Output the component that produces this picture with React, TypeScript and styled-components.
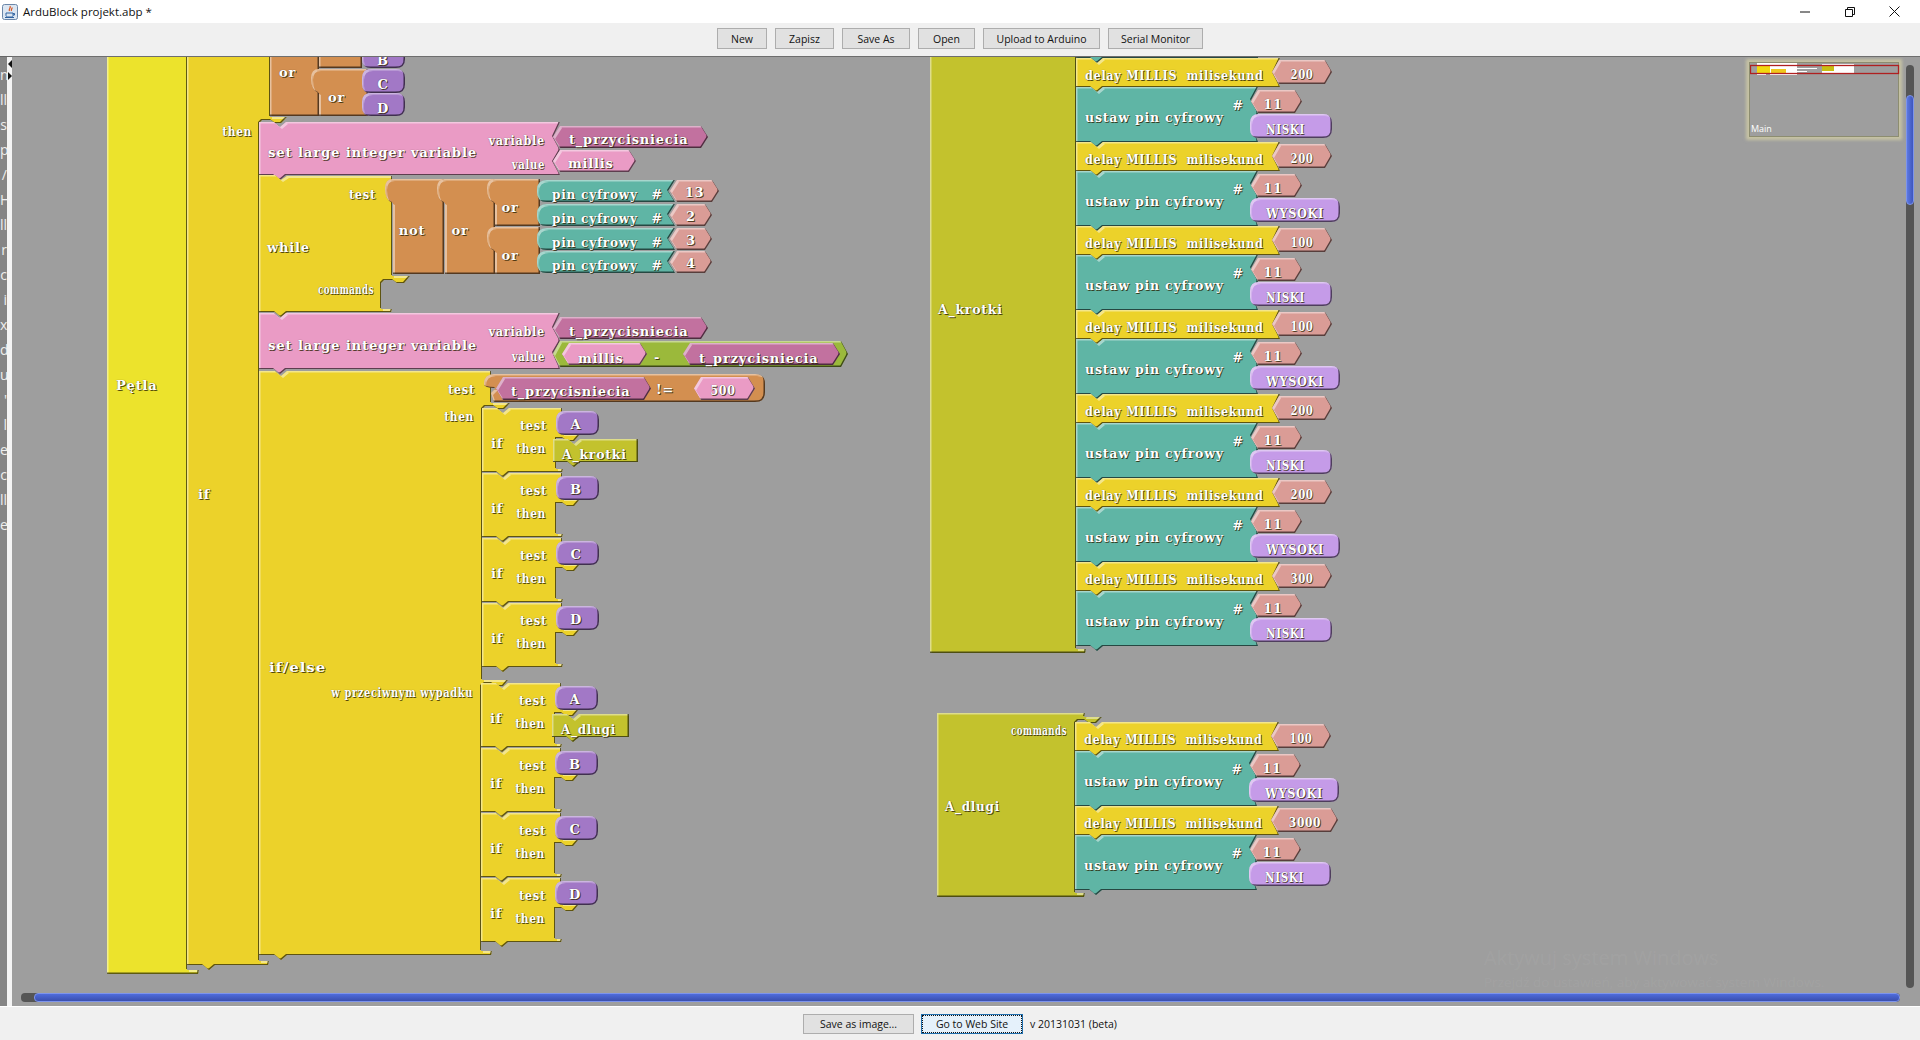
import styled, { createGlobalStyle } from "styled-components";

const C = {
  loop: "#ece32c",
  amber: "#ecd22a",
  pink: "#ea9bc5",
  magenta: "#c2719f",
  teal: "#5fb5a5",
  orange: "#d38f50",
  purple: "#a278c6",
  lilac: "#c59be8",
  salmon: "#da9c96",
  green: "#9bb93b",
  olive: "#c3c22d",
};

const FIT: Record<string, number> = {
  commands: 0.66,
  "w przeciwnym wypadku": 0.76,
  "delay MILLIS  milisekund": 0.865,
  "ustaw pin cyfrowy": 0.965,
  "set large integer variable": 1.02,
  variable: 0.87,
  value: 0.78,
  test: 0.88,
  then: 0.82,
  "if/else": 1.15,
  "pin cyfrowy": 0.93,
  A_krotki: 0.96,
  A_dlugi: 0.92,
  NISKI: 0.8,
  WYSOKI: 0.87,
  "100": 0.78,
  "200": 0.78,
  "300": 0.78,
  "500": 0.85,
  "3000": 0.82,
};

type Art = { d: string; fill: string };
type Text = { x: number; y: number; text: string; align?: "l" | "r" | "c" };

const art: Art[] = [];
const labels: Text[] = [];

const add = (d: string, fill: string) => art.push({ d, fill });
const say = (x: number, y: number, text: string, align: Text["align"] = "l") =>
  labels.push({ x, y, text, align });

// statement block with a dip on top and a tab below
const stmt = (x: number, y: number, w: number, h: number, right = "") =>
  `M${x} ${y}H${x + 15}L${x + 21} ${y + 5}L${x + 27} ${y}H${x + w}${right}V${y + h}H${x + 27}L${x + 21} ${y + h + 5}L${x + 15} ${y + h}H${x}Z`;

const hexPath = (x0: number, y0: number, x1: number, y1: number) => {
  const m = (y0 + y1) / 2;
  return `M${x0} ${m}L${x0 + 7} ${y0}H${x1 - 7}L${x1} ${m}L${x1 - 7} ${y1}H${x0 + 7}Z`;
};

const pillPath = (x0: number, y0: number, x1: number, y1: number) => {
  const r = 9;
  return `M${x0 + r} ${y0}H${x1 - r}Q${x1} ${y0} ${x1} ${y0 + r}V${y1 - r}Q${x1} ${y1} ${x1 - r} ${y1}H${x0 + r}Q${x0} ${y1} ${x0} ${y1 - r}V${y0 + r}Q${x0} ${y0} ${x0 + r} ${y0}Z`;
};

// boolean operator column, the rounded socket sits on its top left corner
const boolPath = (x0: number, y0: number, x1: number, y1: number) =>
  `M${x0} ${y0}H${x1}V${y1}H${x0}V${y0 + 24}Q${x0 - 8} ${y0 + 22} ${x0 - 8} ${y0 + 9}Q${x0 - 8} ${y0} ${x0} ${y0}Z`;

const setVariable = (y: number, h: number) => {
  add(
    stmt(259, y, 301, h, `L553 ${y + 15}L560 ${y + 28}L553 ${y + 40}L560 ${y + h}`),
    C.pink
  );
};

const ifBlock = (x: number, y: number, letter: string, call?: string, callEnd?: number) => {
  add(
    `M${x} ${y}H${x + 15}L${x + 21} ${y + 5}L${x + 27} ${y}H${x + 80}V${y + 26}H${x + 98}L${x + 92} ${y + 33}H${x + 85}L${x + 81} ${y + 30}H${x + 74}V${y + 61}H${x + 81}L${x + 80} ${y + 64}H${x + 27}L${x + 21} ${y + 69}L${x + 15} ${y + 64}H${x}Z`,
    C.amber
  );
  add(pillPath(x + 74, y + 3, x + 117, y + 27), C.purple);
  say(x + 9, y + 35, "if");
  say(x + 65, y + 17, "test", "r");
  say(x + 64, y + 40, "then", "r");
  say(x + 94, y + 16, letter, "c");
  if (call && callEnd) {
    add(stmt(x + 71, y + 31, callEnd - x - 71, 23), C.olive);
    say(x + 80, y + 46, call);
  }
};

const delayRow = (x: number, y: number, ms: string, state: string) => {
  const hexEnd = x + (ms.length > 3 ? 263 : 256);
  const pillEnd = x + (state === "WYSOKI" ? 264 : 256);
  add(stmt(x, y, 204, 29, `L${x + 197} ${y + 15}L${x + 204} ${y + 29}`), C.amber);
  add(hexPath(x + 196, y + 2, hexEnd, y + 26), C.salmon);
  say(x + 9, y + 17, "delay MILLIS  milisekund");
  say((x + 196 + hexEnd) / 2, y + 16, ms, "c");

  const t = y + 29;
  add(
    stmt(x, t, 182, 55, `L${x + 175} ${t + 13}L${x + 182} ${t + 26}L${x + 176} ${t + 40}L${x + 182} ${t + 55}`),
    C.teal
  );
  add(hexPath(x + 175, t + 3, x + 226, t + 26), C.salmon);
  add(pillPath(x + 174, t + 27, pillEnd, t + 51), C.lilac);
  say(x + 9, t + 30, "ustaw pin cyfrowy");
  say(x + 162, t + 18, "#", "c");
  say(x + 197, t + 17, "11", "c");
  say(x + 190, t + 42, state);
};

const buildBlocks = () => {
  // Pętla loop and the big if
  add("M107 40H187V970H199L198 974H107Z", C.loop);
  say(116, 385, "Pętla");
  add(
    "M187 40H270V117H287L281 123H275L271 120H262L259 123V961H269L268 965H215L209 970L203 965H187Z",
    C.amber
  );
  say(198, 494, "if");
  say(252, 131, "then", "r");

  // or tree in the if test
  add("M270 40H319V116H270Z", C.orange);
  add("M319 40H362V68H319Z", C.orange);
  add(boolPath(319, 69, 368, 116), C.orange);
  say(279, 72, "or");
  say(328, 97, "or");
  add(pillPath(362, 40, 405, 68), C.purple);
  add(pillPath(362, 69, 405, 93), C.purple);
  add(pillPath(362, 93, 405, 116), C.purple);
  say(383, 60, "B", "c");
  say(383, 84, "C", "c");
  say(383, 108, "D", "c");

  // first set large integer variable
  setVariable(122, 53);
  say(268, 152, "set large integer variable");
  say(545, 140, "variable", "r");
  say(545, 164, "value", "r");
  add(hexPath(553, 126, 708, 148), C.magenta);
  say(569, 139, "t_przycisniecia");
  add(hexPath(553, 150, 636, 172), C.pink);
  say(568, 163, "millis");

  // while with the not / or tree
  add(
    "M259 175H275L281 180L287 176H392V276H410L404 283H397L393 280H384L381 283V309H392L391 312H287L281 317L275 312H259Z",
    C.amber
  );
  say(376, 194, "test", "r");
  say(267, 247, "while");
  say(374, 289, "commands", "r");
  add(boolPath(393, 179, 444, 274), C.orange);
  add(boolPath(445, 179, 495, 274), C.orange);
  add(boolPath(495, 179, 540, 226), C.orange);
  add(boolPath(495, 227, 540, 274), C.orange);
  say(412, 230, "not", "c");
  say(460, 230, "or", "c");
  say(510, 207, "or", "c");
  say(510, 255, "or", "c");
  ["13", "2", "3", "4"].forEach((pin, i) => {
    const top = 180 + i * 24 - (i === 3 ? 1 : 0);
    const end = pin === "13" ? 719 : 712;
    add(`M547 ${top}H675L668 ${top + 11}L675 ${top + 22}H547Q537 ${top + 22} 537 ${top + 12}V${top + 10}Q537 ${top} 547 ${top}Z`, C.teal);
    add(hexPath(670, top, end, top + 22), C.salmon);
    say(552, top + 14, "pin cyfrowy");
    say(657, top + 14, "#", "c");
    say((670 + end) / 2, top + 12, pin, "c");
  });

  // second set large integer variable
  setVariable(313, 56);
  say(268, 345, "set large integer variable");
  say(545, 331, "variable", "r");
  say(545, 356, "value", "r");
  add(hexPath(553, 317, 708, 339), C.magenta);
  say(569, 331, "t_przycisniecia");
  add(hexPath(553, 341, 848, 367), C.green);
  add(hexPath(562, 343, 647, 365), C.pink);
  say(578, 358, "millis");
  say(657, 357, "-", "c");
  add(hexPath(683, 343, 840, 365), C.magenta);
  say(699, 358, "t_przycisniecia");

  // if/else
  add(
    "M259 371H275L281 376L287 371H491V403H510L504 409H498L494 406H485L482 409V680H508L503 686H496L492 683H485L481 686V951H492L491 955H287L281 960L275 955H259Z",
    C.amber
  );
  say(475, 389, "test", "r");
  say(474, 416, "then", "r");
  say(269, 667, "if/else");
  say(473, 692, "w przeciwnym wypadku", "r");
  add(
    "M494 374H755Q765 374 765 384V392Q765 402 755 402H494L491 393L496 388Q484 388 484 384Q484 374 494 374Z",
    C.orange
  );
  add(hexPath(496, 377, 651, 400), C.magenta);
  say(511, 391, "t_przycisniecia");
  say(665, 389, "!=", "c");
  add(hexPath(694, 377, 755, 400), C.pink);
  say(723, 390, "500", "c");

  const tests = ["A", "B", "C", "D"];
  tests.forEach((t, i) => ifBlock(482, 408 + i * 65, t, i === 0 ? "A_krotki" : undefined, 638));
  tests.forEach((t, i) => ifBlock(481, 683 + i * 65, t, i === 0 ? "A_dlugi" : undefined, 629));

  // function A_krotki
  add("M930 40H1076V649H1086L1085 653H930Z", C.olive);
  say(938, 309, "A_krotki");
  add(stmt(1076, 3, 182, 55), C.teal);
  [
    ["200", "NISKI"],
    ["200", "WYSOKI"],
    ["100", "NISKI"],
    ["100", "WYSOKI"],
    ["200", "NISKI"],
    ["200", "WYSOKI"],
    ["300", "NISKI"],
  ].forEach(([ms, state], i) => delayRow(1076, 58 + i * 84, ms, state));

  // function A_dlugi
  add(
    "M937 713H1085L1084 717H1102L1096 723H1089L1085 720H1078L1075 723V893H1085L1084 897H937Z",
    C.olive
  );
  say(945, 806, "A_dlugi");
  say(1067, 730, "commands", "r");
  delayRow(1075, 722, "100", "WYSOKI");
  delayRow(1075, 806, "3000", "NISKI");
};

buildBlocks();

const paletteLetters = ["n", "ll", "s", "p", "/", "H", "ll", "r", "c", "i", "x", "d", "u", "'", "l", "el", "c", "ll", "e"];

const GlobalStyle = createGlobalStyle`
  html, body {
    margin: 0;
    padding: 0;
    height: 100%;
    overflow: hidden;
    background: #f0f0f0;
  }
`;

const Window = styled.div`
  width: 1920px;
  height: 1040px;
  display: flex;
  flex-direction: column;
  font-family: "Open Sans", "Noto Sans", sans-serif;
  color: #111;
`;

const TitleBar = styled.header`
  height: 23px;
  flex: none;
  background: #fff;
  display: flex;
  align-items: center;
  padding: 0 3px 0 2px;
`;

const WindowTitle = styled.span`
  margin-left: 5px;
  font-size: 11.5px;
  flex: 1;
`;

const WindowButton = styled.div`
  width: 45px;
  height: 23px;
  display: flex;
  align-items: center;
  justify-content: center;
`;

const Toolbar = styled.nav`
  height: 33px;
  flex: none;
  box-sizing: border-box;
  padding-top: 5px;
  background: #f0f0f0;
  display: flex;
  justify-content: center;
  align-items: flex-start;
  gap: 8px;
`;

const ToolButton = styled.button<{ $w: number; $h?: number; $focus?: boolean }>`
  width: ${(p) => p.$w}px;
  height: ${(p) => p.$h ?? 21}px;
  padding: 0;
  box-sizing: border-box;
  font-family: inherit;
  font-size: 10.5px;
  color: #111;
  background: ${(p) => (p.$focus ? "#e5f1fb" : "#e1e1e1")};
  border: 1px solid ${(p) => (p.$focus ? "#1f6fae" : "#adadad")};
  outline: ${(p) => (p.$focus ? "1px dotted #111" : "none")};
  outline-offset: -2px;
`;

const Workspace = styled.main`
  flex: 1;
  min-height: 0;
  display: flex;
`;

const Palette = styled.aside`
  width: 7px;
  flex: none;
  background: #858585;
  border-top: 1px solid #666;
  overflow: hidden;
  padding-top: 5px;
  box-sizing: border-box;
`;

const PaletteItem = styled.div`
  height: 25px;
  line-height: 25px;
  text-align: right;
  font-size: 14px;
  color: #eee;
  white-space: nowrap;
`;

const Splitter = styled.div`
  width: 5px;
  flex: none;
  background: #f4f4f4;
  border-top: 1px solid #666;
  box-sizing: border-box;
  display: flex;
  flex-direction: column;
  gap: 4px;
  padding: 3px 0 0 1px;
`;

const Arrow = styled.i<{ $right?: boolean }>`
  display: block;
  width: 0;
  height: 0;
  border-top: 4px solid transparent;
  border-bottom: 4px solid transparent;
  ${(p) => (p.$right ? "border-left: 4px solid #111;" : "border-right: 4px solid #111;")}
`;

const BlockCanvas = styled.section`
  flex: 1;
  position: relative;
  overflow: hidden;
  background: #9e9e9e;
  border-top: 1px solid #6e6e6e;
  box-sizing: border-box;
`;

// the plane uses page coordinates, it is scrolled under the canvas
const Plane = styled.div`
  position: absolute;
  left: -12px;
  top: -57px;
  width: 1920px;
  height: 1040px;
`;

const BlockArt = styled.svg`
  position: absolute;
  inset: 0;
  width: 1920px;
  height: 1040px;
`;

const ALIGN = {
  l: { shift: "0", origin: "left center" },
  r: { shift: "-100%", origin: "right center" },
  c: { shift: "-50%", origin: "center center" },
};

const BlockLabel = styled.span.attrs<{ $x: number; $y: number; $align: "l" | "r" | "c"; $fit: number }>((p) => ({
  style: {
    left: p.$x,
    top: p.$y + 1,
    transform: `translate(${ALIGN[p.$align].shift}, -50%) scaleX(${p.$fit})`,
    transformOrigin: ALIGN[p.$align].origin,
  },
}))`
  position: absolute;
  font-family: "DejaVu Serif", "Liberation Serif", serif;
  font-weight: 700;
  font-size: 13px;
  letter-spacing: 0.8px;
  line-height: 14px;
  color: #fff;
  white-space: pre;
  text-shadow: 1px 1px 0 rgba(40, 30, 0, 0.75), 0 0 1px rgba(40, 30, 0, 0.6);
`;

const MiniMap = styled.div`
  position: absolute;
  left: 1737px;
  top: 5px;
  width: 150px;
  height: 75px;
  background: #9e9e9e;
  border: 1px solid #8d8d70;
  box-shadow: 0 0 3px 3px rgba(232, 226, 170, 0.55);
  box-sizing: border-box;
`;

const MiniArt = styled.svg`
  position: absolute;
  inset: 0;
  width: 150px;
  height: 75px;
`;

const MiniName = styled.span`
  position: absolute;
  left: 1px;
  bottom: 1px;
  font-size: 9px;
  line-height: 12px;
  color: #fff;
`;

const Track = styled.div<{ $vertical?: boolean }>`
  position: absolute;
  background: #555;
  border-radius: 4px;
  ${(p) =>
    p.$vertical
      ? "left: 1894px; top: 8px; width: 8px; height: 923px;"
      : "left: 9px; top: 936px; width: 1879px; height: 9px;"}
`;

const Thumb = styled.div<{ $vertical?: boolean }>`
  position: absolute;
  border-radius: 4px;
  box-sizing: border-box;
  border: 1px solid #7d94ec;
  ${(p) =>
    p.$vertical
      ? "left: 0; top: 30px; width: 8px; height: 110px; background: linear-gradient(90deg, #5c78e2, #3e56bd);"
      : "left: 13px; top: 0; width: 1866px; height: 9px; background: linear-gradient(180deg, #4f6cdc, #3a4fae);"}
`;

const Watermark = styled.div`
  position: absolute;
  left: 1472px;
  top: 887px;
  color: rgba(255, 255, 255, 0.055);
  pointer-events: none;
`;

const WatermarkTitle = styled.div`
  font-size: 20px;
  line-height: 28px;
`;

const WatermarkHint = styled.div`
  font-size: 13.5px;
  line-height: 20px;
`;

const Footer = styled.footer`
  height: 34px;
  flex: none;
  box-sizing: border-box;
  border-top: 1px solid #fff;
  background: #f0f0f0;
  display: flex;
  align-items: center;
  justify-content: center;
  gap: 7px;
`;

const Version = styled.span`
  font-size: 10.5px;
`;

function JavaIcon() {
  return (
    <svg width="16" height="16" viewBox="0 0 16 16">
      <rect x="0.5" y="0.5" width="15" height="15" rx="2" fill="#dbe6f2" stroke="#6b86a8" />
      <path d="M8 2c1.500 2-2 3-.5 5M10 3.500c.5 1.500-1.500 2-.5 3.500" fill="none" stroke="#d9531e" strokeWidth="1.200" />
      <path d="M4 9h7v2.500c0 1-1 1.500-2 1.500H6c-1 0-2-.5-2-1.500zM11 9.500h1.500v1.500H11M3 13.500h9" fill="none" stroke="#2f62a0" strokeWidth="1" />
    </svg>
  );
}

function MinimizeIcon() {
  return (
    <svg width="10" height="10" viewBox="0 0 10 10">
      <path d="M0 5h10" stroke="#111" strokeWidth="1" />
    </svg>
  );
}

function RestoreIcon() {
  return (
    <svg width="10" height="10" viewBox="0 0 10 10">
      <path d="M.5 2.500h7v7h-7zM2.500 2.500V.5h7v7h-2" fill="none" stroke="#111" />
    </svg>
  );
}

function CloseIcon() {
  return (
    <svg width="11" height="11" viewBox="0 0 11 11">
      <path d="M.5.5l10 10M10.500.5l-10 10" stroke="#111" />
    </svg>
  );
}

export default function App() {
  return (
    <Window>
      <GlobalStyle />
      <TitleBar>
        <JavaIcon />
        <WindowTitle>ArduBlock projekt.abp *</WindowTitle>
        <WindowButton><MinimizeIcon /></WindowButton>
        <WindowButton><RestoreIcon /></WindowButton>
        <WindowButton><CloseIcon /></WindowButton>
      </TitleBar>
      <Toolbar>
        <ToolButton $w={50}>New</ToolButton>
        <ToolButton $w={59}>Zapisz</ToolButton>
        <ToolButton $w={68}>Save As</ToolButton>
        <ToolButton $w={57}>Open</ToolButton>
        <ToolButton $w={117}>Upload to Arduino</ToolButton>
        <ToolButton $w={95}>Serial Monitor</ToolButton>
      </Toolbar>
      <Workspace>
        <Palette>
          {paletteLetters.map((l, i) => (
            <PaletteItem key={i}>{l}</PaletteItem>
          ))}
        </Palette>
        <Splitter>
          <Arrow />
          <Arrow $right />
        </Splitter>
        <BlockCanvas>
          <Plane>
            <BlockArt viewBox="0 0 1920 1040">
              <defs>
                <filter id="bevel" x="-3%" y="-3%" width="106%" height="106%" colorInterpolationFilters="sRGB">
                  <feOffset in="SourceAlpha" dx="1.500" dy="1.500" result="down" />
                  <feComposite in="SourceAlpha" in2="down" operator="out" result="topEdge" />
                  <feFlood floodColor="#fff" floodOpacity="0.45" />
                  <feComposite in2="topEdge" operator="in" result="light" />
                  <feOffset in="SourceAlpha" dx="-1.500" dy="-1.500" result="up" />
                  <feComposite in="SourceAlpha" in2="up" operator="out" result="lowEdge" />
                  <feFlood floodColor="#000" floodOpacity="0.6" />
                  <feComposite in2="lowEdge" operator="in" result="dark" />
                  <feMerge>
                    <feMergeNode in="SourceGraphic" />
                    <feMergeNode in="light" />
                    <feMergeNode in="dark" />
                  </feMerge>
                </filter>
              </defs>
              {art.map((a, i) => (
                <path key={i} d={a.d} fill={a.fill} filter="url(#bevel)" />
              ))}
            </BlockArt>
            {labels.map((l, i) => (
              <BlockLabel key={i} $x={l.x} $y={l.y} $align={l.align ?? "l"} $fit={FIT[l.text] ?? 1}>
                {l.text}
              </BlockLabel>
            ))}
          </Plane>
          <MiniMap>
            <MiniArt viewBox="0 0 150 75">
              <rect x="7" y="0" width="40" height="2" fill="#fff" />
              <rect x="20" y="2" width="27" height="10" fill="#fff" />
              <rect x="7" y="2" width="13" height="9" fill="#f2d90f" />
              <rect x="21" y="6" width="15" height="5" fill="#f0c81c" />
              <rect x="47" y="5" width="20" height="1" fill="#fff" />
              <rect x="47" y="8" width="10" height="1" fill="#fff" />
              <rect x="7" y="11" width="9" height="1" fill="#fff" />
              <rect x="72" y="1" width="32" height="9" fill="#fff" />
              <rect x="72" y="3" width="12" height="5" fill="#c8bf12" />
              <rect x="0.500" y="2.500" width="148" height="8" fill="none" stroke="#b02020" strokeWidth="1.300" />
            </MiniArt>
            <MiniName>Main</MiniName>
          </MiniMap>
          <Watermark>
            <WatermarkTitle>Aktywuj system Windows</WatermarkTitle>
            <WatermarkHint>Przejdź do ustawień, aby aktywować system Windows.</WatermarkHint>
          </Watermark>
          <Track $vertical>
            <Thumb $vertical />
          </Track>
          <Track>
            <Thumb />
          </Track>
        </BlockCanvas>
      </Workspace>
      <Footer>
        <ToolButton $w={111} $h={20}>Save as image...</ToolButton>
        <ToolButton $w={102} $h={20} $focus>Go to Web Site</ToolButton>
        <Version>v 20131031 (beta)</Version>
      </Footer>
    </Window>
  );
}
